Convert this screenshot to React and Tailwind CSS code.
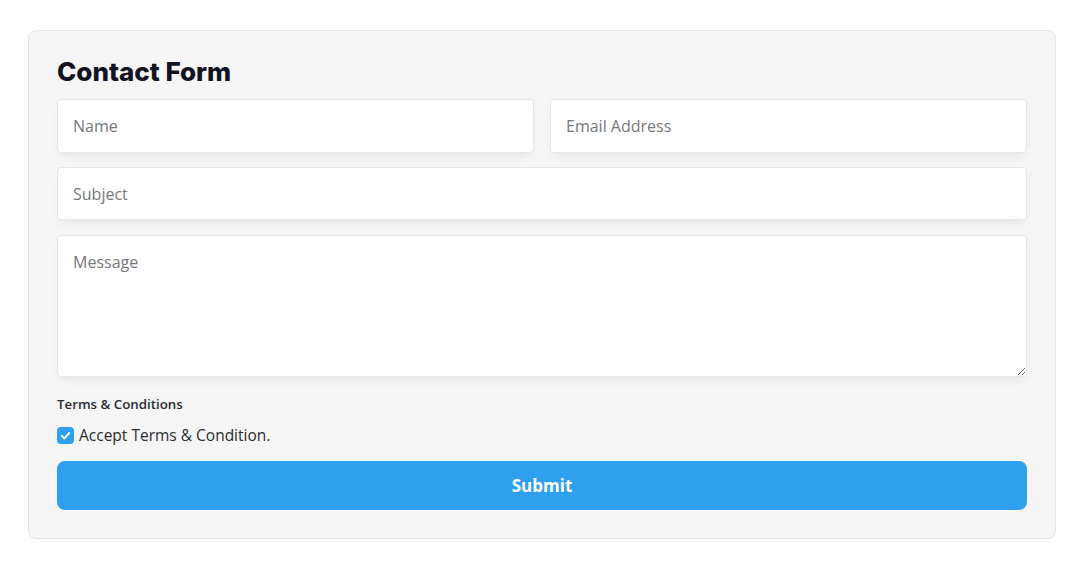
import React, { useState } from 'react'

export default function App() {
  const [accepted, setAccepted] = useState(true)

  return (
    <div className="min-h-screen bg-white pt-[30px] px-[28px]" style={{ fontFamily: '"Open Sans", "Noto Sans", sans-serif' }}>
      <form
        className="w-[1028px] rounded-lg border border-[#e4e4e4] bg-[#f5f5f5] px-[28px] pt-[25px] pb-[28px]"
        onSubmit={(e) => e.preventDefault()}
      >
        <h2 className="text-[26px] leading-[32px] font-extrabold text-[#111322]" style={{ fontFamily: 'Inter, "Noto Sans", sans-serif' }}>
          Contact Form
        </h2>

        <div className="mt-[11px] grid grid-cols-2 gap-4">
          <input
            type="text"
            placeholder="Name"
            className="h-[54px] rounded border border-[#e6e6e6] bg-white px-[15px] text-[16px] text-gray-700 placeholder-[#75777c] shadow-[0_6px_10px_-4px_rgba(0,0,0,0.08)] outline-none"
          />
          <input
            type="email"
            placeholder="Email Address"
            className="h-[54px] rounded border border-[#e6e6e6] bg-white px-[15px] text-[16px] text-gray-700 placeholder-[#75777c] shadow-[0_6px_10px_-4px_rgba(0,0,0,0.08)] outline-none"
          />
        </div>

        <input
          type="text"
          placeholder="Subject"
          className="mt-[14px] block h-[53px] w-full rounded border border-[#e6e6e6] bg-white px-[15px] text-[16px] text-gray-700 placeholder-[#75777c] shadow-[0_6px_10px_-4px_rgba(0,0,0,0.08)] outline-none"
        />

        <textarea
          placeholder="Message"
          className="mt-[15px] block h-[142px] w-full rounded border border-[#e6e6e6] bg-white px-[15px] py-[14px] text-[16px] text-gray-700 placeholder-[#75777c] shadow-[0_6px_10px_-4px_rgba(0,0,0,0.08)] outline-none"
        />

        <p className="mt-[18px] text-[13.3px] leading-[18px] font-semibold text-[#2b2d33]">Terms &amp; Conditions</p>

        <label className="mt-[12px] flex cursor-pointer items-center gap-[5px] text-[15.5px] leading-[20px] text-[#2b2d33]">
          <input
            type="checkbox"
            checked={accepted}
            onChange={(e) => setAccepted(e.target.checked)}
            className="sr-only"
          />
          <span className={`flex h-[17px] w-[17px] items-center justify-center rounded-[4px] ${accepted ? 'bg-[#2ea0ef]' : 'border border-gray-400 bg-white'}`}>
            {accepted && (
              <svg viewBox="0 0 16 16" className="h-[13px] w-[13px]" fill="none" stroke="white" strokeWidth="2.4" strokeLinecap="round" strokeLinejoin="round">
                <path d="M3.5 8.5l3 3 6-6.5" />
              </svg>
            )}
          </span>
          Accept Terms &amp; Condition.
        </label>

        <button
          type="submit"
          className="mt-[16px] block h-[49px] w-full rounded-lg bg-[#2ea0ef] text-[17px] font-bold text-white"
        >
          Submit
        </button>
      </form>
    </div>
  )
}
